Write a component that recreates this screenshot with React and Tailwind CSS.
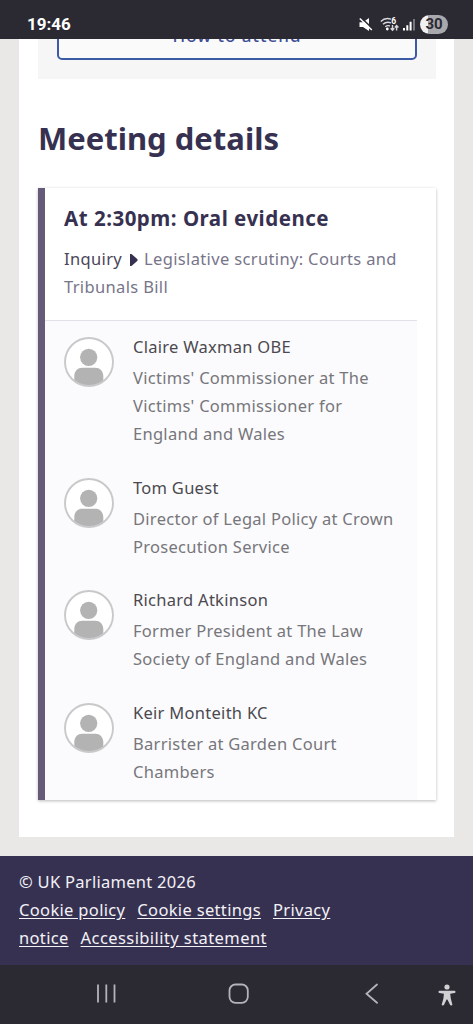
const witnesses = [
  {
    name: 'Claire Waxman OBE',
    role: ["Victims' Commissioner at The", "Victims' Commissioner for", 'England and Wales']
  },
  {
    name: 'Tom Guest',
    role: ['Director of Legal Policy at Crown', 'Prosecution Service']
  },
  {
    name: 'Richard Atkinson',
    role: ['Former President at The Law', 'Society of England and Wales']
  },
  {
    name: 'Keir Monteith KC',
    role: ['Barrister at Garden Court', 'Chambers']
  }
]

function StatusBar() {
  return (
    <header className="relative z-10 flex h-[39px] shrink-0 items-center justify-between bg-[#2b2932] pt-[9px] pl-[27px] pr-[25px] font-['Roboto',sans-serif] tracking-normal text-white">
      <span className="text-[17px] leading-[30px] font-bold">19:46</span>
      <div className="flex items-center">
        <svg className="h-[15px] w-[14px]" viewBox="0 0 14 15">
          <path d="M0.500 5.200h3.500L10 1v13L4 10H0.500z" fill="#fff" />
          <path d="M1.800 0.500l12 11.500" stroke="#2b2932" strokeWidth="1.6" />
          <path d="M0.800 1.500l12 11.500" stroke="#fff" strokeWidth="1.5" />
        </svg>
        <svg className="ml-[7px] h-[15px] w-[20px]" viewBox="0 0 20 15">
          <g fill="none" stroke="#d8d7dc" strokeWidth="1.4">
            <path d="M0.800 4.500C3.500 1.800 7.500 1 11 2.200" />
            <path d="M3 7.300C5 5.400 8 4.800 11 5.800" />
            <path d="M5.300 9.800c1.400-1.200 3-1.400 4.600-.8" />
            <path d="M12.500 8v5.300M10.700 11.300l1.800 1.900 1.800-1.900M16.600 13.500V8.500M14.800 10.400l1.800-1.900 1.800 1.900" />
          </g>
          <circle cx="7.300" cy="12" r="1.400" fill="#fff" />
          <text x="11.300" y="7" fill="#fff" fontSize="8.500" fontWeight="700">6</text>
        </svg>
        <svg className="ml-[3px] h-[13px] w-[13px]" viewBox="0 0 13 13">
          <path d="M0 10h2v2.500H0zM3.300 7.300h2v5.200h-2zM6.600 3.800h2v8.700h-2z" fill="#fff" />
          <path d="M10 1h2v11.500h-2z" fill="#77757d" />
        </svg>
        <span className="ml-[4px] flex h-[19px] w-[28px] items-center justify-center rounded-full bg-linear-to-r from-[#f1f1f2] from-30% to-[#a9a8ad] to-30% text-[15px] font-bold text-[#2b2932]">
          30
        </span>
      </div>
    </header>
  )
}

function Avatar() {
  return (
    <svg className="mt-[4px] size-[50px] shrink-0" viewBox="0 0 50 50">
      <circle cx="25" cy="25" r="24" fill="#fff" />
      <circle cx="24.700" cy="20.300" r="8.600" fill="#b3b3b3" />
      <path d="M10.300 44V39c0-5 3.500-8.300 8-8.300h13c4.500 0 8 3.300 8 8.300v5a24 24 0 0 1-29 0z" fill="#b3b3b3" />
      <circle cx="25" cy="25" r="24" fill="none" stroke="#c9c9cb" strokeWidth="1.900" />
    </svg>
  )
}

function Witness({ name, role }) {
  return (
    <li className="flex gap-[19px] pb-[25.6px]">
      <Avatar />
      <div className="whitespace-nowrap">
        <h4 className="text-[#4b494f]">{name}</h4>
        <p className="mt-[3px] text-[#77767b]">
          {role.map((line) => (
            <span key={line} className="block">{line}</span>
          ))}
        </p>
      </div>
    </li>
  )
}

function NavBar() {
  return (
    <nav className="h-[59px] shrink-0 bg-[#2b2932]">
      <svg className="h-[59px] w-[473px]" viewBox="0 0 473 59" fill="none" stroke="#b5b3ba" strokeWidth="1.8">
        <path d="M98 19.500v18M106.300 19.500v18M114.500 19.500v18" />
        <rect x="229.500" y="19.500" width="18.300" height="18.300" rx="6" />
        <path d="M377 19.500l-10.500 9.300 10.500 9" strokeLinecap="round" />
        <g fill="#d0cfd2" stroke="none">
          <circle cx="447" cy="22" r="2.600" />
          <path d="M439.500 25.800h15q1 0 1 1.100t-1 1.100l-4.300.8.6 4.700 1.600 6q0 1-1.200 1-.9 0-1.200-.8L447.400 34.500h-.8l-2.500 5.200q-.4.800-1.300.8-1.100 0-1.100-1l1.700-6 .5-4.700-4.400-.8q-1 0-1-1.100t1-1.100z" />
        </g>
      </svg>
    </nav>
  )
}

export default function App() {
  return (
    <div className="flex h-[1024px] w-[473px] flex-col overflow-hidden bg-[#e9e8e6] font-['Noto_Sans','Open_Sans',sans-serif] text-[16.5px] leading-[28px] tracking-[0.28px]">
      <StatusBar />

      <main className="mx-[19px] -mt-[39px] h-[837px] w-[435px] shrink-0 bg-white px-[19px]">
        <div className="h-[79px] w-[398px] bg-[#f6f6f6] px-[19px] pt-3">
          <button className="h-[48px] w-[360px] rounded-[5px] border-2 border-[#3d5aa5] bg-[#fafafa] text-[17px] leading-[44px] font-medium tracking-[1px] text-[#3f4f96]">
            How to attend
          </button>
        </div>

        <h2 className="mt-[37px] text-[31px] leading-[44px] font-bold tracking-normal whitespace-nowrap text-[#373151]">Meeting details</h2>

        {/* Session card */}
        <section className="mt-[28px] h-[612px] w-[398px] border-l-[7px] border-[#655a78] bg-white shadow-[0_1px_3px_rgba(0,0,0,0.28)]">
          <div className="h-[132px] pt-[16px] pl-[19px] whitespace-nowrap">
            <h3 className="text-[20.5px] leading-[28px] font-bold tracking-[0.5px] text-[#373151]">At 2:30pm: Oral evidence</h3>
            <p className="mt-[13px] tracking-[0.35px] text-[#77758a]">
              <span className="text-[#4a4658]">Inquiry</span>
              <svg className="mr-[6px] ml-[8px] inline-block h-[12px] w-[8px] align-[-1px]" viewBox="0 0 8 12">
                <path d="M1.500 0L7.500 5.200v1.600L1.500 12H0V0z" fill="#373151" />
              </svg>
              Legislative scrutiny: Courts and
              <br />
              Tribunals Bill
            </p>
          </div>
          <ul className="h-[480px] w-[372px] border-t border-[#e2e1e7] bg-[#fbfbfd] pt-[12px] pl-[19px]">
            {witnesses.map((witness) => (
              <Witness key={witness.name} {...witness} />
            ))}
          </ul>
        </section>
      </main>

      <footer className="mt-[19px] h-[109px] shrink-0 bg-[#373151] px-[19px] pt-[12px] whitespace-nowrap text-[#f3f2f7]">
        <p>© UK Parliament 2026</p>
        <div className="tracking-[0.33px]">
          <a className="mr-[12px] underline underline-offset-2">Cookie policy</a>
          <a className="mr-[12px] underline underline-offset-2">Cookie settings</a>
          <a className="mr-[12px] underline underline-offset-2">
            Privacy
            <br />
            notice
          </a>
          <a className="tracking-[0.42px] underline underline-offset-2">Accessibility statement</a>
        </div>
      </footer>

      <NavBar />
    </div>
  )
}
